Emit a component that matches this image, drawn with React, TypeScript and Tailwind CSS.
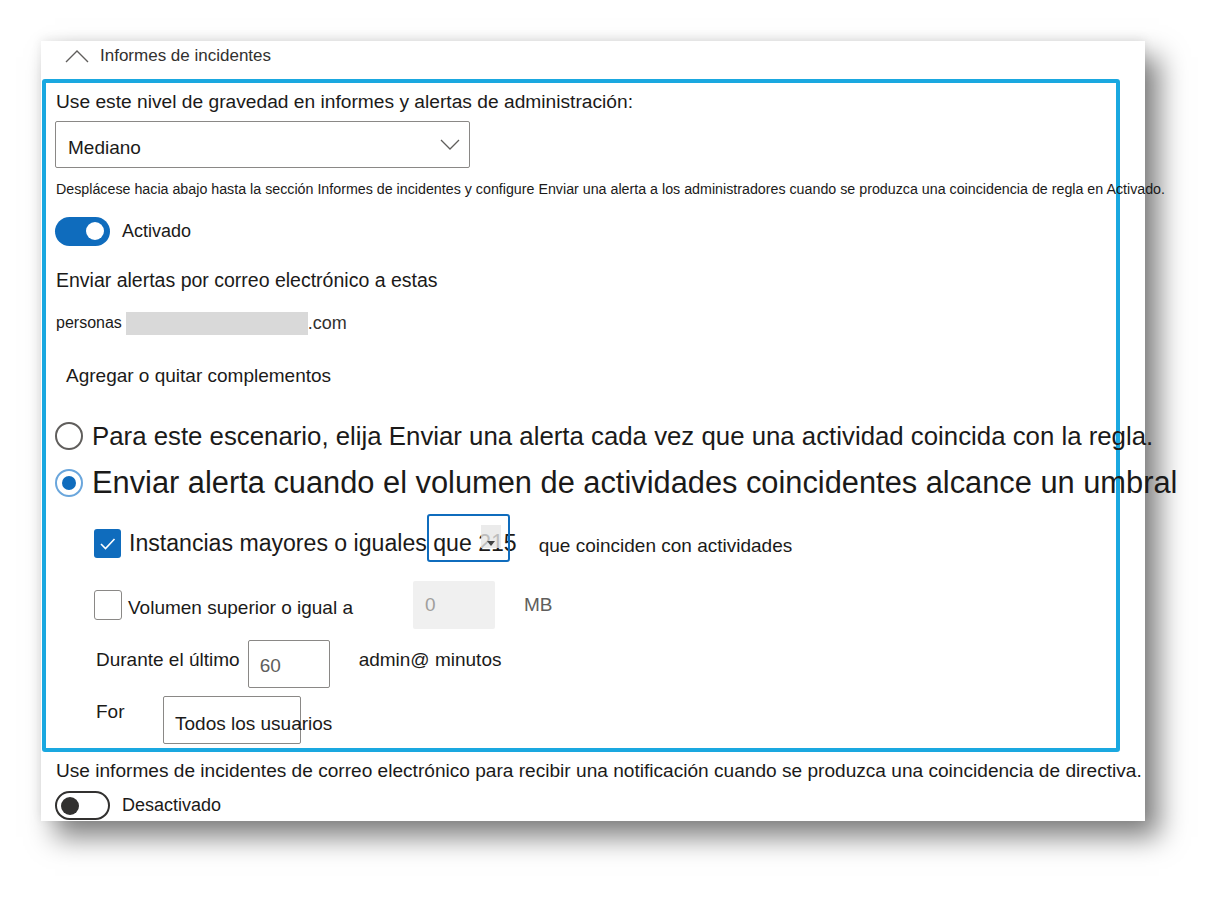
import React from "react";

function ChevronUp() {
  return (
    <svg width="24" height="14" viewBox="0 0 24 14" fill="none" aria-hidden>
      <path d="M1 13 L12 2 L23 13" stroke="#605e5c" strokeWidth="1.4" />
    </svg>
  );
}

function ChevronDown() {
  return (
    <svg width="20" height="12" viewBox="0 0 20 12" fill="none" aria-hidden>
      <path d="M1 1 L10 10 L19 1" stroke="#605e5c" strokeWidth="1.3" />
    </svg>
  );
}

function Check() {
  return (
    <svg width="17" height="13" viewBox="0 0 17 13" fill="none" aria-hidden>
      <path d="M2 7 L6.5 11.5 L15.5 2" stroke="#ffffff" strokeWidth="1.6" />
    </svg>
  );
}

export default function App() {
  return (
    <div className="w-[1229px] h-[905px] bg-white pl-[41px] pt-[41px] font-['Liberation_Sans',Arial,sans-serif] text-[#1b1a19] overflow-hidden">
      <div className="w-[1104px] h-[780px] bg-white flex flex-col shadow-[14px_16px_26px_rgba(0,0,0,0.5),0_-2px_10px_rgba(0,0,0,0.08)]">
        {/* header */}
        <div className="h-[38px] flex items-center pl-[24px] pb-[8px] gap-[11px] text-[17px] text-[#323130]">
          <ChevronUp />
          <span>Informes de incidentes</span>
        </div>

        {/* highlighted settings block */}
        <div className="ml-[1px] w-[1078px] h-[673px] border-4 border-[#1aa8e0] rounded-[3px] flex flex-col pl-[10px]">
          <div className="h-[38px] flex items-center text-[19.2px]">
            Use este nivel de gravedad en informes y alertas de administración:
          </div>

          <div className="h-[47px] -ml-[1px] w-[415px] border-[1.5px] border-[#8a8886] rounded-[2px] flex items-center justify-between pl-[12px] pr-[9px]">
            <span className="text-[19px] pt-[7px]">Mediano</span>
            <ChevronDown />
          </div>

          <div className="h-[44px] flex items-center text-[14.25px] whitespace-nowrap">
            Desplácese hacia abajo hasta la sección Informes de incidentes y configure Enviar una alerta a los administradores cuando se produzca una coincidencia de regla en Activado.
          </div>

          <div className="h-[38px] flex items-center gap-[12px]">
            <div className="-ml-[1px] w-[55px] h-[29px] rounded-full bg-[#0f6cbd] flex items-center justify-end pr-[6px]">
              <div className="w-[18px] h-[18px] rounded-full bg-white" />
            </div>
            <span className="text-[18px]">Activado</span>
          </div>

          <div className="h-[62px] flex items-center text-[19.5px]">
            Enviar alertas por correo electrónico a estas
          </div>

          <div className="h-[22px] flex items-center">
            <span className="text-[16px]">personas</span>
            <div className="ml-[4px] w-[182px] h-[23px] bg-[#d9d9d9]" />
            <span className="text-[18px] text-[#323130]">.com</span>
          </div>

          <div className="h-[84px] flex items-center pl-[10px] text-[19px]">
            Agregar o quitar complementos
          </div>

          <div className="h-[36px] flex items-center gap-[9px] whitespace-nowrap">
            <div className="-ml-[1px] w-[28px] h-[28px] rounded-full border-[2px] border-[#605e5c] shrink-0" />
            <span className="text-[25.8px]">
              Para este escenario, elija Enviar una alerta cada vez que una actividad coincida con la regla.
            </span>
          </div>

          <div className="h-[58px] flex items-center gap-[9px] whitespace-nowrap">
            <div className="-ml-[1px] w-[28px] h-[28px] rounded-full border-[2px] border-[#6aa6dc] flex items-center justify-center shrink-0">
              <div className="w-[14px] h-[14px] rounded-full bg-[#0f6cbd]" />
            </div>
            <span className="text-[30.8px]">
              Enviar alerta cuando el volumen de actividades coincidentes alcance un umbral
            </span>
          </div>

          <div className="h-[62px] flex items-center pl-[38px] whitespace-nowrap">
            <div className="w-[27px] h-[29px] rounded-[3px] bg-[#0f6cbd] flex items-center justify-center shrink-0">
              <Check />
            </div>
            <div className="relative ml-[8px]">
              <span className="text-[23.1px]">Instancias mayores o iguales que 215</span>
              <div className="absolute left-[298px] -top-[12px] w-[83px] h-[48px] border-2 border-[#0f6cbd] rounded-[3px]">
                <div className="absolute left-[52px] top-[9px] w-[20px] h-[23px] bg-[#e6e6e6]/80 flex items-end justify-center pb-[2px]">
                  <svg width="8" height="5" viewBox="0 0 8 5" aria-hidden>
                    <path d="M0 0 L8 0 L4 5 Z" fill="#444" />
                  </svg>
                </div>
              </div>
            </div>
            <span className="ml-[22px] mt-[6px] text-[19px]">que coinciden con actividades</span>
          </div>

          <div className="h-[62px] flex items-center pl-[38px] whitespace-nowrap">
            <div className="w-[28px] h-[30px] rounded-[3px] border-[1.5px] border-[#8a8886] shrink-0" />
            <span className="ml-[6px] mt-[6px] text-[19px] w-[285px]">Volumen superior o igual a</span>
            <div className="w-[82px] h-[48px] bg-[#f0f0f0] rounded-[2px] flex items-center pl-[12px] text-[19px] text-[#a19f9d]">
              0
            </div>
            <span className="ml-[29px] text-[19px] text-[#605e5c]">MB</span>
          </div>

          <div className="h-[56px] flex items-center pl-[40px] whitespace-nowrap">
            <span className="text-[19px] -mt-[8px]">Durante el último</span>
            <div className="ml-[8px] w-[82px] h-[48px] border-[1.5px] border-[#8a8886] rounded-[2px] flex items-center pl-[11px] pt-[4px] text-[19px] text-[#605e5c]">
              60
            </div>
            <span className="ml-[29px] -mt-[8px] text-[19px]">admin@ minutos</span>
          </div>

          <div className="h-[56px] flex items-center pl-[40px] whitespace-nowrap">
            <span className="text-[19px] w-[67px] -mt-[16px]">For</span>
            <div className="relative w-[138px] h-[48px] border-[1.5px] border-[#8a8886] rounded-[2px]">
              <span className="absolute left-[11px] top-[13px] text-[19px]">Todos los usuarios</span>
            </div>
          </div>
        </div>

        {/* below block */}
        <div className="h-[38px] flex items-center pl-[15px] text-[19.1px] whitespace-nowrap">
          Use informes de incidentes de correo electrónico para recibir una notificación cuando se produzca una coincidencia de directiva.
        </div>
        <div className="h-[31px] flex items-center pl-[14px] gap-[12px]">
          <div className="w-[55px] h-[29px] rounded-full border-[2px] border-[#323130] flex items-center pl-[4px]">
            <div className="w-[18px] h-[18px] rounded-full bg-[#323130]" />
          </div>
          <span className="text-[18px]">Desactivado</span>
        </div>
      </div>
    </div>
  );
}
